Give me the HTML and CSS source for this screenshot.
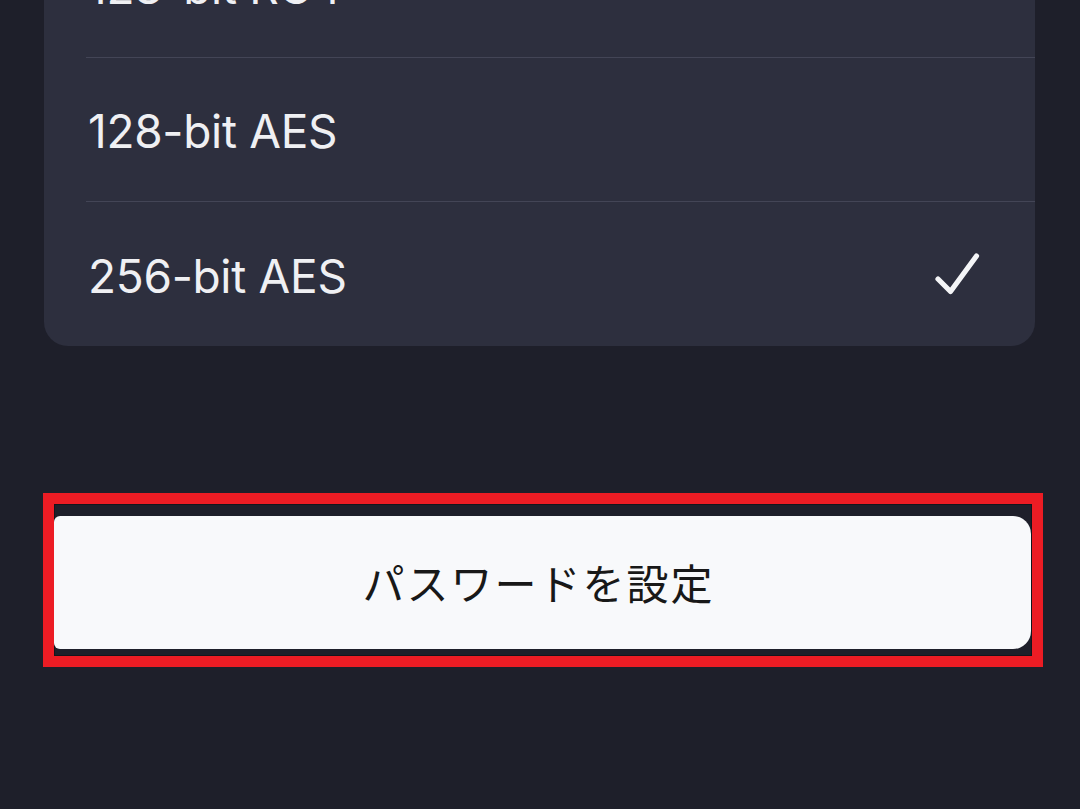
FILE: index.html
```html
<!DOCTYPE html>
<html lang="ja">
<head>
<meta charset="utf-8">
<link rel="stylesheet" href="styles.css">
</head>
<body>
<div class="screen">
  <div class="card">
    <div class="row row-first"><span class="label">128-bit RC4</span></div>
    <div class="row"><span class="label">128-bit AES</span></div>
    <div class="row row-last">
      <span class="label">256-bit AES</span>
      <svg class="check" width="48" height="47" viewBox="0 0 48 47" aria-hidden="true">
        <path d="M4 28 L16.5 40.5 L42.5 5" fill="none" stroke="#f4f5f7" stroke-width="5.2" stroke-linecap="round" stroke-linejoin="round"/>
      </svg>
    </div>
  </div>
  <div class="highlight">
    <div class="button">パスワードを設定</div>
  </div>
</div>
</body>
</html>
```
FILE: styles.css
```css
html, body {
  margin: 0;
  padding: 0;
  background: #1e1f2a;
}
.screen {
  width: 1080px;
  height: 809px;
  overflow: hidden;
  background: #1e1f2a;
  font-family: Inter, "Noto Sans CJK JP", sans-serif;
}
.card {
  margin: -86px 0 0 44px;
  width: 991px;
  background: #2d2f3e;
  border-radius: 0 0 24px 24px;
}
.row {
  height: 144px;
  margin-left: 42px;
  padding-right: 53px;
  display: flex;
  align-items: center;
  justify-content: space-between;
  border-bottom: 1px solid #434556;
  box-sizing: border-box;
}
.row-last {
  border-bottom: none;
  height: 144px;
}
.label {
  color: #eff0f3;
  font-size: 46px;
  font-weight: 400;
  padding-left: 2px;
  padding-top: 3px;
  letter-spacing: -0.3px;
}
.check {
  display: block;
  margin-top: 1px;
}
.highlight {
  margin: 147px 0 0 43px;
  width: 1000px;
  box-sizing: border-box;
  border: 11px solid #ec1c24;
  box-shadow: inset 0 0 0 1px #14151c;
  padding: 12px 1px 7px 0;
}
.button {
  height: 133px;
  background: #f8f9fb;
  border-radius: 6px 18px 18px 6px;
  display: flex;
  align-items: center;
  justify-content: center;
  color: #181818;
  font-family: "Noto Sans CJK JP", sans-serif;
  font-size: 42px;
  letter-spacing: 2px;
  padding-bottom: 2px;
  padding-right: 8px;
  box-sizing: border-box;
}
```
